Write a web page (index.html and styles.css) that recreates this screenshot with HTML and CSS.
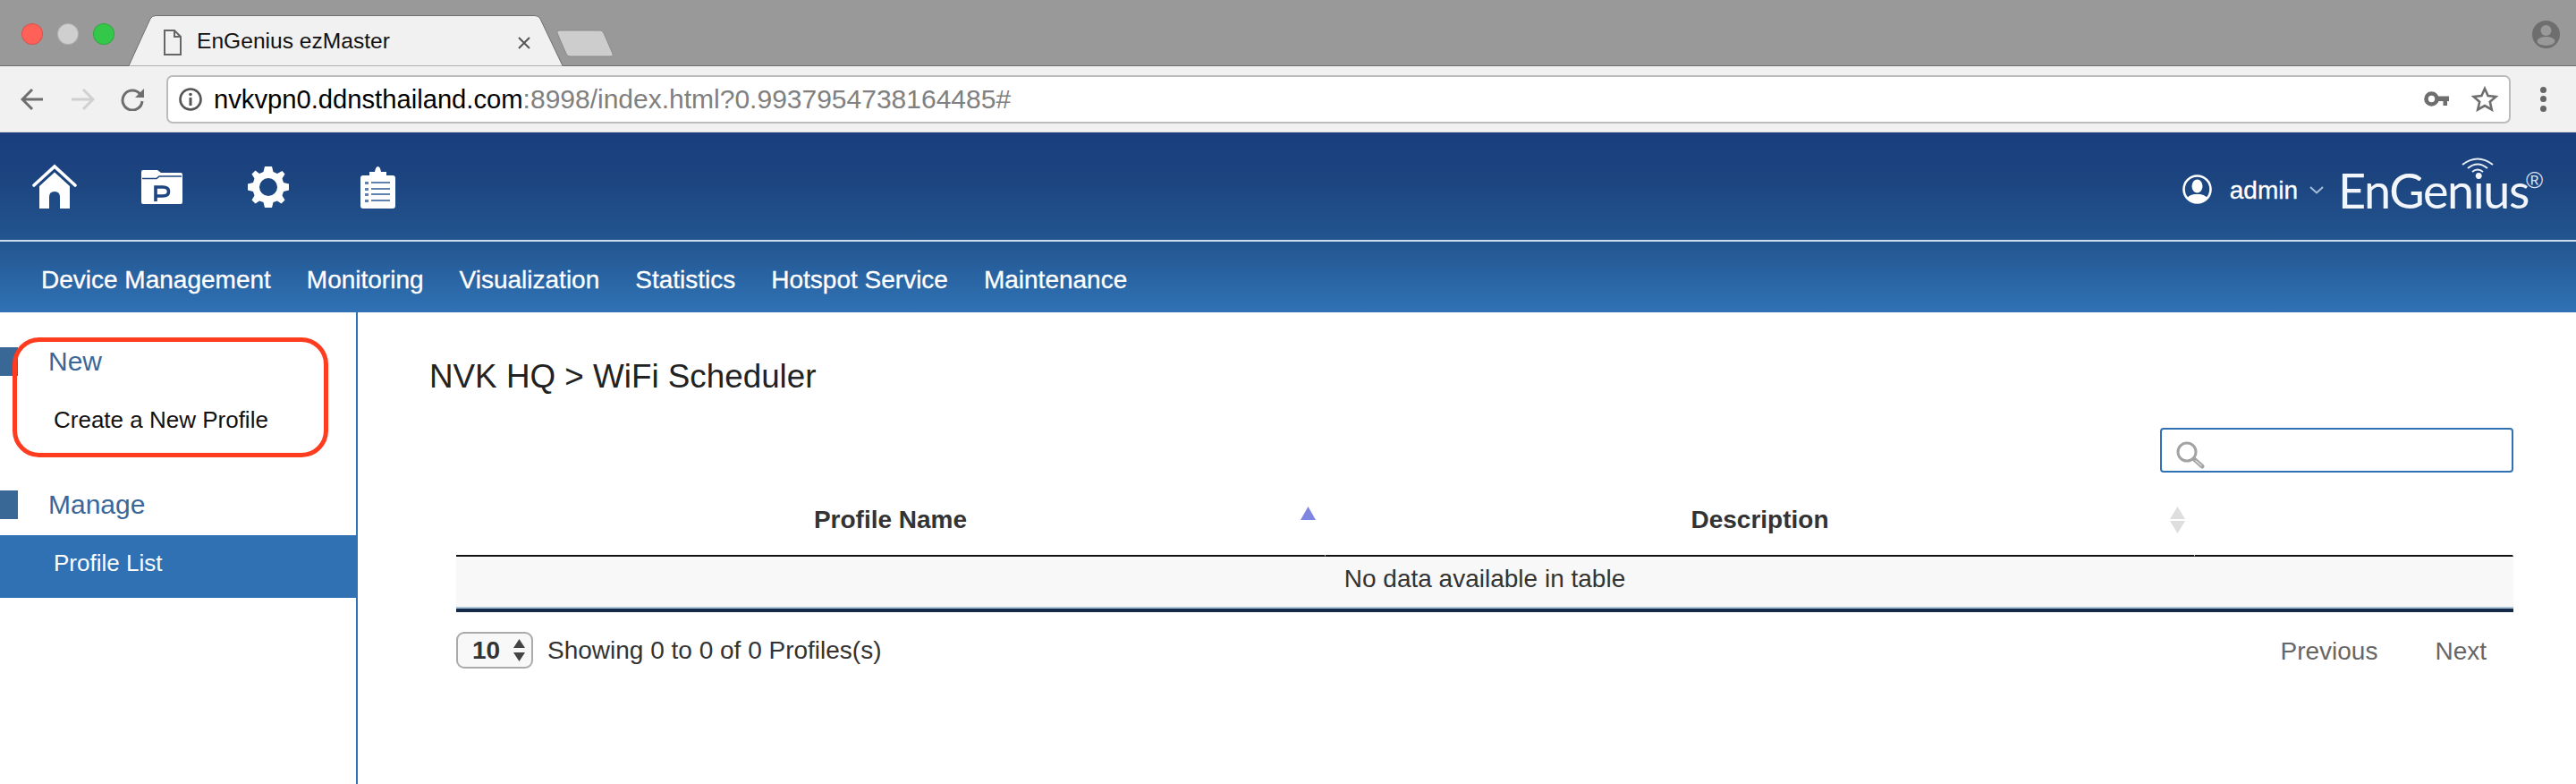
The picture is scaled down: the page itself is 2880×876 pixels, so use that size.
FILE: index.html
```html
<!DOCTYPE html>
<html lang="en">
<head>
<meta charset="utf-8">
<title>EnGenius ezMaster</title>
<link rel="stylesheet" href="styles.css">
</head>
<body>
<div class="tabstrip">
  <div class="lights">
    <span class="light red"></span><span class="light grey"></span><span class="light green"></span>
  </div>
  <div class="tab">
    <svg class="tab-shape" viewBox="0 0 485 57" preserveAspectRatio="none"><path d="M0 56.5 L24 4 Q26 .5 30 .5 H454 Q458 .5 460 4 L485 56.5" fill="#f1f1f1" stroke="#6f6f6f" stroke-width="1"/></svg>
    <svg class="tab-page" width="20" height="29" viewBox="0 0 20 29"><path d="M1 1 H12 L19 8 V28 H1 Z M12 1 V8 H19" fill="none" stroke="#666" stroke-width="2"/></svg>
    <span class="tab-title">EnGenius ezMaster</span>
    <svg class="tab-close" width="14" height="14" viewBox="0 0 14 14"><path d="M1 1 L13 13 M13 1 L1 13" stroke="#555" stroke-width="2"/></svg>
  </div>
  <svg class="newtab" width="64" height="31" viewBox="0 0 64 31"><path d="M3 1 H49 Q52 1 53 4 L63 27 Q64 30 60 30 H15 Q12 30 11 27 L1 4 Q0 1 3 1 Z" fill="#cdcdcd" stroke="#8a8a8a" stroke-width="1"/></svg>
  <svg class="profile" width="31" height="31" viewBox="0 0 31 31"><defs><clipPath id="pc"><circle cx="15.5" cy="15.5" r="15.5"/></clipPath></defs><circle cx="15.5" cy="15.5" r="15.5" fill="#6e6e6e"/><g clip-path="url(#pc)" fill="#999"><circle cx="15.5" cy="11" r="6"/><ellipse cx="15.5" cy="23" rx="10" ry="5"/></g></svg>
</div>

<div class="toolbar">
  <svg class="tb-back" width="26" height="26" viewBox="0 0 26 26"><path d="M25 13 H3 M13 2 L2 13 L13 24" fill="none" stroke="#6e6e6e" stroke-width="3"/></svg>
  <svg class="tb-forward" width="27" height="26" viewBox="0 0 27 26"><path d="M1 13 H24 M14 2 L25 13 L14 24" fill="none" stroke="#d0d0d0" stroke-width="3"/></svg>
  <svg class="tb-reload" width="27" height="26" viewBox="0 0 27 26"><path d="M21.5 7 A11 11 0 1 0 24 15" fill="none" stroke="#6e6e6e" stroke-width="3"/><path d="M26 1 V11 H16 Z" fill="#6e6e6e"/></svg>
  <div class="address">
    <svg class="addr-info" width="26" height="26" viewBox="0 0 26 26"><circle cx="13" cy="13" r="11.5" fill="none" stroke="#555" stroke-width="2.6"/><path d="M13 11 V20" stroke="#555" stroke-width="3"/><circle cx="13" cy="7.5" r="1.8" fill="#555"/></svg>
    <span class="url"><span class="url-host">nvkvpn0.ddnsthailand.com</span>:8998/index.html?0.9937954738164485#</span>
    <svg class="addr-key" width="28" height="17" viewBox="0 0 28 17"><circle cx="8.5" cy="8.5" r="6" fill="none" stroke="#6e6e6e" stroke-width="4.6"/><path d="M14 5.5 H28 V11 H26 V16 H21.5 V11 H14 Z" fill="#6e6e6e"/></svg>
    <svg class="addr-star" width="30" height="29" viewBox="0 0 30 29"><path d="M15 3 L18.6 11 L27.5 12 L20.8 17.8 L22.8 26.5 L15 22 L7.2 26.5 L9.2 17.8 L2.5 12 L11.4 11 Z" fill="none" stroke="#6e6e6e" stroke-width="2.6"/></svg>
  </div>
  <div class="dots"><span class="dot"></span><span class="dot"></span><span class="dot"></span></div>
</div>

<header class="header">
  <div class="header-top">
    <div class="app-icons">
      <svg class="ic ic-home" width="50" height="50" viewBox="0 0 50 50"><path d="M2 24 L25 3 L48 24" fill="none" stroke="#fff" stroke-width="3.6" stroke-linecap="round"/><path d="M8 25 L25 9.500 L42 25 V50 H31 V37 Q31 31 25 31 Q19 31 19 37 V50 H8 Z" fill="#fff"/></svg>
      <svg class="ic ic-folder" width="46" height="38" viewBox="0 0 46 38"><path d="M2 0 H18 L22 3 H44 Q46 3 46 5 V36 Q46 38 44 38 H2 Q0 38 0 36 V2 Q0 0 2 0 Z" fill="#fff"/><path d="M1 9.500 H17 L20 7 H45" fill="none" stroke="#1d4683" stroke-width="1.600"/><path d="M16 35 V19 H24 Q30.500 19 30.500 24 Q30.500 29 24 29 H16" fill="none" stroke="#1d4683" stroke-width="3.600"/></svg>
      <svg class="ic ic-gear" width="46" height="46" viewBox="0 0 46 46"><path fill="#fff" fill-rule="evenodd" d="M19 0 H27 L28.5 6 L33 8 L38.500 5 L41.500 8.500 L38.500 13.500 L40 18 L46 19.500 V26.500 L40 28 L38.500 32.500 L41.500 37.500 L37.500 41.500 L33 38.500 L28.500 40 L27 46 H19 L17.500 40 L13 38.500 L8.500 41.500 L4.500 37.500 L7.500 32.500 L6 28 L0 26.500 V19.500 L6 18 L7.500 13.500 L4.500 8.500 L8.500 4.500 L13 8 L17.500 6 Z M23 13 A10 10 0 1 0 23 33 A10 10 0 1 0 23 13 Z"/></svg>
      <svg class="ic ic-clip" width="39" height="48" viewBox="0 0 39 48"><path d="M3 11 H10 V7 H16 Q17 1 19.500 1 Q22 1 23 7 H29 V11 H36 Q39 11 39 14 V45 Q39 48 36 48 H3 Q0 48 0 45 V14 Q0 11 3 11 Z" fill="#fff"/><g fill="#5f82b1"><rect x="5" y="18" width="4" height="3"/><rect x="5" y="25" width="4" height="3"/><rect x="5" y="31" width="4" height="3"/><rect x="5" y="38" width="4" height="3"/><rect x="12" y="18" width="21" height="2"/><rect x="12" y="25" width="21" height="2"/><rect x="12" y="31" width="21" height="2"/><rect x="12" y="38" width="21" height="2"/></g></svg>
    </div>
    <div class="account">
      <svg class="ic ic-user" width="33" height="33" viewBox="0 0 33 33"><defs><clipPath id="uc"><circle cx="16.500" cy="16.500" r="14.500"/></clipPath></defs><circle cx="16.500" cy="16.500" r="15" fill="none" stroke="#fff" stroke-width="2.600"/><g clip-path="url(#uc)" fill="#fff"><ellipse cx="16.500" cy="13" rx="6" ry="7.500"/><path d="M3 33 Q4 23 13 22 H20 Q29 23 30 33 Z"/></g></svg>
      <span class="account-name">admin</span>
      <svg class="chev" width="16" height="9" viewBox="0 0 16 9"><path d="M1 1 L8 7.500 L15 1" fill="none" stroke="#a9bdd8" stroke-width="2"/></svg>
      <div class="logo">
        <span class="logo-text">EnGenius</span>
        <svg class="logo-wifi" width="38" height="24" viewBox="0 0 38 24"><path d="M2 9 Q19 -4 36 9 M8 13 Q19 4 30 13 M13 17 Q19 12 25 17" fill="none" stroke="#e8eef6" stroke-width="2"/></svg>
        <span class="logo-reg">®</span>
      </div>
    </div>
  </div>
  <nav class="nav">
    <a class="nav-item">Device Management</a>
    <a class="nav-item">Monitoring</a>
    <a class="nav-item">Visualization</a>
    <a class="nav-item">Statistics</a>
    <a class="nav-item">Hotspot Service</a>
    <a class="nav-item">Maintenance</a>
  </nav>
</header>

<div class="main">
  <aside class="sidebar">
    <div class="side-head"><span class="side-mark"></span><span class="side-title">New</span></div>
    <div class="side-item">Create a New Profile</div>
    <div class="side-head side-head-second"><span class="side-mark"></span><span class="side-title">Manage</span></div>
    <div class="side-item side-item-active">Profile List</div>
    <div class="annotation"></div>
  </aside>
  <main class="content">
    <h1 class="crumb">NVK HQ &gt; WiFi Scheduler</h1>
    <div class="search">
      <svg width="32" height="31" viewBox="0 0 32 31"><circle cx="12" cy="12" r="10" fill="none" stroke="#a3a3a3" stroke-width="3"/><path d="M20 20 L29 28" stroke="#a3a3a3" stroke-width="5" stroke-linecap="round"/><path d="M22 22 L28 27" stroke="#ddd" stroke-width="1.500" stroke-linecap="round"/></svg>
    </div>
    <table class="grid">
      <colgroup><col class="col-a"><col class="col-b"><col class="col-c"></colgroup>
      <thead>
        <tr>
          <th>Profile Name<svg class="sort sort-asc" width="17" height="15" viewBox="0 0 17 15"><path d="M8.500 0 L17 15 H0 Z" fill="#7e86e0"/></svg></th>
          <th>Description<svg class="sort sort-both" width="17" height="30" viewBox="0 0 17 30"><path d="M8.500 0 L17 14 H0 Z M0 16 H17 L8.500 30 Z" fill="#dedede"/></svg></th>
          <th></th>
        </tr>
      </thead>
      <tbody>
        <tr><td colspan="3">No data available in table</td></tr>
      </tbody>
    </table>
    <div class="foot">
      <div class="foot-left">
        <div class="pagesize"><span class="pagesize-val">10</span><svg width="13" height="25" viewBox="0 0 13 25"><path d="M6.500 0 L13 10 H0 Z M0 15 H13 L6.500 25 Z" fill="#444"/></svg></div>
        <span class="info">Showing 0 to 0 of 0 Profiles(s)</span>
      </div>
      <div class="pager"><a class="page-link">Previous</a><a class="page-link">Next</a></div>
    </div>
  </main>
</div>
</body>
</html>
```
FILE: styles.css
```css
* { box-sizing: border-box; }
html, body { margin: 0; padding: 0; }
body {
  width: 2880px;
  height: 876px;
  overflow: hidden;
  display: flex;
  flex-direction: column;
  background: #fff;
  font-family: "Liberation Sans", Arial, sans-serif;
  color: #333;
}
svg { display: block; flex: none; }

/* browser chrome */
.tabstrip {
  height: 74px;
  flex: none;
  display: flex;
  background: #999;
  border-bottom: 1px solid #6f6f6f;
}
.lights { display: flex; gap: 16px; margin: 26px 0 0 24px; }
.light { width: 24px; height: 24px; border-radius: 50%; border: 1px solid rgba(0,0,0,.15); }
.red { background: #ff6159; }
.grey { background: #cfcfcf; }
.green { background: #34c84a; }
.tab {
  position: relative;
  width: 485px;
  height: 57px;
  margin: 17px 0 0 16px;
  display: flex;
  align-items: center;
  padding-left: 39px;
}
.tab-shape { position: absolute; left: 0; top: 0; width: 485px; height: 57px; }
.tab-page { position: relative; margin-top: 4px; }
.tab-title { position: relative; margin-left: 17px; font-size: 24.600px; color: #111; width: 359px; white-space: nowrap; }
.tab-close { position: relative; margin-top: 4px; }
.newtab { margin: 33px 0 0 -7px; }
.profile { margin: 23px 18px 0 auto; }

.toolbar {
  height: 74px;
  flex: none;
  display: flex;
  align-items: center;
  background: #f1f1f1;
  border-bottom: 1px solid #d8d8d8;
  padding-left: 23px;
}
.tb-forward { margin-left: 30px; }
.tb-reload { margin-left: 29px; }
.address {
  margin-left: 24px;
  width: 2621px;
  height: 54px;
  display: flex;
  align-items: center;
  background: #fff;
  border: 2px solid #bcbcbc;
  border-radius: 7px;
  padding-left: 12px;
}
.url { margin-left: 13px; font-size: 30px; color: #808080; white-space: nowrap; }
.url-host { font-size: 29.200px; color: #000; }
.addr-key { margin-left: auto; }
.addr-star { margin: 0 12px 0 25px; }
.dots { margin-left: 33px; display: flex; flex-direction: column; gap: 3.500px; }
.dot { width: 7px; height: 7px; border-radius: 50%; background: #666; }

/* app header */
.header {
  height: 201px;
  flex: none;
  display: flex;
  flex-direction: column;
  background: linear-gradient(#1a3e7e 0%, #1c447f 25%, #23558f 60%, #2f72b5 100%);
}
.header-top {
  height: 122px;
  flex: none;
  display: flex;
  justify-content: space-between;
  border-bottom: 2px solid #cfdcec;
  padding: 35px 37px 0 36px;
}
.app-icons { display: flex; align-items: flex-start; }
.ic { filter: blur(.4px); }
.ic-folder { margin: 7px 0 0 72px; }
.ic-gear { margin: 3px 0 0 73px; }
.ic-clip { margin: 2px 0 0 80px; }
.account { display: flex; align-items: flex-start; }
.ic-user { margin-top: 12px; }
.account-name { margin: 14px 0 0 20px; font-size: 28px; line-height: 32px; color: #fff; -webkit-text-stroke: .3px #fff; }
.chev { margin: 25px 0 0 13px; }
.logo { position: relative; width: 229px; margin-left: 16px; }
.logo-text {
  display: inline-block;
  font-family: Lato, "Liberation Sans", sans-serif;
  font-weight: 400;
  font-size: 54px;
  letter-spacing: -1.400px;
  line-height: 60px;
  color: #f2f5fa;
  white-space: nowrap;
  filter: blur(.5px);
}
.logo-wifi { position: absolute; left: 137px; top: -8px; filter: blur(.4px); }
.logo-reg { position: absolute; left: 210px; top: 6px; font-size: 26px; line-height: 24px; color: #d5dfec; }

.nav { flex: 1; display: flex; align-items: center; gap: 40px; padding: 6px 0 0 46px; }
.nav-item { font-size: 28px; line-height: 32px; color: #fff; white-space: nowrap; -webkit-text-stroke: .3px #fff; }

/* body */
.main { flex: 1; display: flex; min-height: 0; }
.sidebar {
  position: relative;
  width: 400px;
  flex: none;
  border-right: 2px solid #3071b3;
  padding-top: 39px;
}
.side-head { height: 32px; display: flex; align-items: center; }
.side-head-second { margin-top: 40px; }
.side-mark { width: 20px; height: 32px; background: #396897; }
.side-title { margin-left: 34px; font-size: 30px; line-height: 32px; color: #3a6797; }
.side-item {
  height: 70px;
  margin-top: 18px;
  padding: 16px 0 0 60px;
  font-size: 26px;
  line-height: 30px;
  color: #111;
}
.side-item-active { background: #3071b3; color: #fff; }
.annotation {
  position: absolute;
  left: 14px;
  top: 28px;
  width: 353px;
  height: 134px;
  border: 5px solid #ff3b20;
  border-radius: 30px;
}

.content { flex: 1; min-width: 0; display: flex; flex-direction: column; padding: 0 70px 0 80px; }
.crumb { margin: 50px 0 0; font-size: 36.800px; line-height: 44px; font-weight: 400; color: #222; }
.search {
  align-self: flex-end;
  width: 395px;
  height: 50px;
  margin-top: 35px;
  padding: 13px 0 0 16px;
  border: 2.500px solid #3071b3;
  border-radius: 4px;
}
.grid {
  width: 2300px;
  margin: 2px 0 0 30px;
  border-collapse: separate;
  border-spacing: 0;
  table-layout: fixed;
}
.col-a, .col-b { width: 972px; }
.grid th {
  position: relative;
  height: 92px;
  padding: 11px 0 0;
  font-size: 28px;
  font-weight: 700;
  color: #333;
  text-align: center;
  border-bottom: 2px solid #111;
  border-right: 1px solid #fff;
}
.grid td {
  height: 62px;
  padding: 0 0 8px;
  font-size: 28px;
  color: #333;
  text-align: center;
  background: #f8f8f8;
  border-bottom: 4px solid #15294a;
  box-shadow: inset 0 -2px 0 #a9c4d6;
}
.sort { position: absolute; }
.sort-asc { right: 10px; top: 36px; }
.sort-both { right: 10px; top: 36px; }

.foot { margin: 22px 0 0 30px; display: flex; justify-content: space-between; }
.foot-left { display: flex; align-items: center; }
.pagesize {
  width: 86px;
  height: 41px;
  display: flex;
  align-items: center;
  padding-left: 16px;
  background: #f8f8f8;
  border: 2px solid #aaa;
  border-radius: 9px;
}
.pagesize-val { width: 46px; font-size: 28px; font-weight: 700; color: #333; }
.info { margin-left: 16px; font-size: 28px; color: #333; }
.pager { display: flex; gap: 64px; padding: 6px 30px 0 0; }
.page-link { font-size: 28px; line-height: 32px; color: #666; }
```
